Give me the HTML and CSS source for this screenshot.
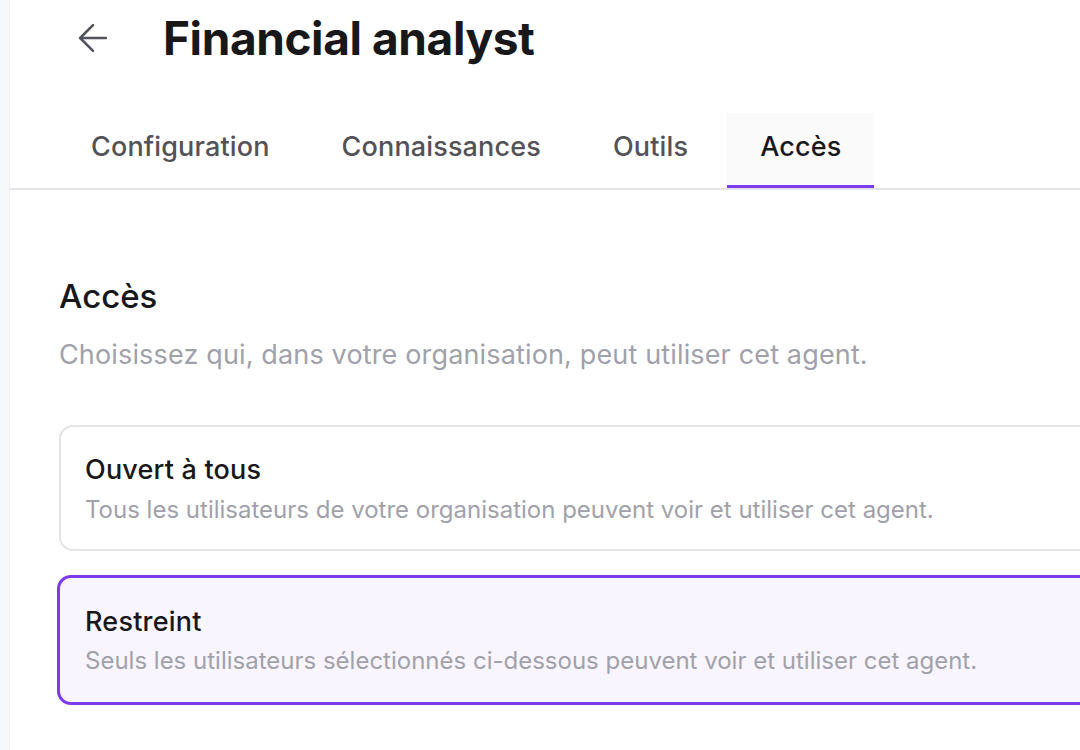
FILE: index.html
```html
<!DOCTYPE html>
<html lang="fr">
<head>
<meta charset="utf-8">
<title>Financial analyst</title>
<link rel="stylesheet" href="styles.css">
</head>
<body>
<div class="app">
  <aside class="rail"></aside>
  <main class="main">
    <header class="top">
      <button class="back" aria-label="Retour">
        <svg width="44" height="44" viewBox="0 0 24 24" fill="none" stroke="currentColor" stroke-width="1.4" stroke-linecap="round" stroke-linejoin="round"><path d="M19 12H5"/><path d="M12 19l-7-7 7-7"/></svg>
      </button>
      <h1 class="title">Financial analyst</h1>
    </header>
    <nav class="tabs">
      <a class="tab">Configuration</a>
      <a class="tab">Connaissances</a>
      <a class="tab">Outils</a>
      <a class="tab active">Accès</a>
    </nav>
    <section class="content">
      <h2 class="heading">Accès</h2>
      <p class="lead">Choisissez qui, dans votre organisation, peut utiliser cet agent.</p>
      <div class="options">
        <div class="option">
          <div class="opt-title">Ouvert à tous</div>
          <div class="opt-desc">Tous les utilisateurs de votre organisation peuvent voir et utiliser cet agent.</div>
        </div>
        <div class="option selected">
          <div class="opt-title">Restreint</div>
          <div class="opt-desc">Seuls les utilisateurs sélectionnés ci-dessous peuvent voir et utiliser cet agent.</div>
        </div>
      </div>
    </section>
  </main>
</div>
</body>
</html>
```

FILE: styles.css
```css
html, body {
  margin: 0;
  padding: 0;
  background: #ffffff;
  overflow: hidden;
}
body {
  font-family: Inter, "Noto Sans", "Liberation Sans", sans-serif;
  color: #18181b;
  width: 1080px;
  height: 750px;
}
.app {
  display: flex;
  height: 750px;
  overflow: hidden;
}
.rail {
  width: 9px;
  flex: none;
  background: #f7f8fa;
  border-right: 1px solid #eef0f3;
}
.main {
  flex: none;
  width: 1070px;
  overflow: hidden;
}
.top {
  display: flex;
  align-items: center;
  height: 76px;
  padding-left: 61px;
}
.back {
  border: 0;
  background: none;
  padding: 0;
  width: 44px;
  height: 44px;
  color: #52525b;
  display: flex;
  align-items: center;
  justify-content: center;
}
.title {
  margin: 0 0 0 48px;
  font-size: 46px;
  font-weight: 700;
  letter-spacing: -0.4px;
  line-height: 56px;
}
.tabs {
  display: flex;
  gap: 6px;
  margin-top: 37px;
  padding-left: 48px;
  border-bottom: 2px solid #e4e4e7;
}
.tab {
  padding: 18px 33px 22px;
  font-size: 27px;
  line-height: 32px;
  font-weight: 500;
  letter-spacing: 0.15px;
  color: #525257;
  border-bottom: 3px solid transparent;
}
.tab.active {
  color: #18181b;
  background: #fafafa;
  border-bottom-color: #7c3aed;
}
.content {
  padding: 86px 0 0 49px;
}
.heading {
  margin: 0;
  font-size: 33px;
  font-weight: 500;
  line-height: 40px;
}
.lead {
  margin: 22px 0 0;
  font-size: 27px;
  line-height: 34px;
  letter-spacing: 0.15px;
  color: #a1a1aa;
}
.options {
  display: flex;
  flex-direction: column;
  gap: 24px;
  margin-top: 53px;
}
.option {
  border: 2px solid #e4e4e7;
  border-radius: 14px;
  padding: 27px 24px 24px;
  width: 1100px;
}
.option.selected {
  border: 3px solid #7c3aed;
  background: #f8f5fe;
  margin-left: -2px;
  padding: 28px 24px 26px 25px;
}
.opt-title {
  font-size: 27px;
  font-weight: 500;
  letter-spacing: 0.2px;
  line-height: 32px;
}
.opt-desc {
  margin-top: 9px;
  font-size: 24px;
  line-height: 30px;
  color: #a1a1aa;
}
.option.selected .opt-desc {
  margin-top: 8px;
}
```
